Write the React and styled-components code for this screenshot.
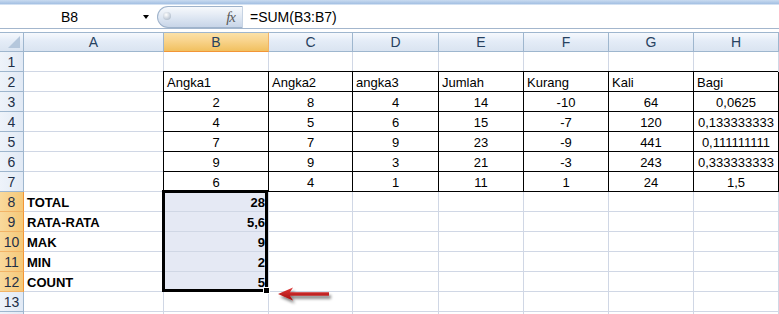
import React from "react";
import styled, { createGlobalStyle, css } from "styled-components";

const Global = createGlobalStyle`
  html, body { margin: 0; padding: 0; background: #fff; }
  body { font-family: "Liberation Sans", Arial, sans-serif; font-size: 13px; color: #000; }
`;

const COLS = [24, 140, 105, 84, 86, 85, 85, 85, 85];
const LETTERS = ["A", "B", "C", "D", "E", "F", "G", "H"];

const Page = styled.div`
  width: 779px;
  height: 314px;
  overflow: hidden;
`;

const RibbonEdge = styled.div`
  height: 5px;
  background: linear-gradient(#c9dbf0, #a8c3e4 70%, #e8f0fa);
`;

const FormulaBar = styled.div`
  height: 22px;
  display: flex;
  align-items: stretch;
  border-bottom: 1px solid #a3b6cd;
  margin-bottom: 3px;
  padding-top: 1px;
`;

const NameBox = styled.div`
  width: 157px;
  display: flex;
  align-items: center;
  position: relative;
  font-size: 14px;
  span { flex: 1; text-align: center; padding-right: 18px; }
`;

const DropArrow = styled.i`
  position: absolute;
  right: 8px;
  top: 9px;
  border-left: 3px solid transparent;
  border-right: 3px solid transparent;
  border-top: 4px solid #000;
`;

const FxPill = styled.div`
  width: 85px;
  border: 1px solid #9fb3cb;
  border-right: none;
  border-radius: 12px 0 0 12px;
  background: linear-gradient(#f7f9fc, #dde6f2 55%, #c8d5e8);
  display: flex;
  align-items: center;
  justify-content: space-between;
  padding: 0 7px 0 5px;
  box-sizing: border-box;
`;

const Knob = styled.i`
  width: 8px;
  height: 8px;
  border-radius: 50%;
  background: radial-gradient(circle at 40% 35%, #ffffff, #b9c4d2 70%);
  margin-top: -2px;
`;

const Fx = styled.span`
  font-family: "Liberation Serif", serif;
  font-style: italic;
  font-size: 15px;
  color: #5a5a5a;
  letter-spacing: -1px;
`;

const FormulaInput = styled.div`
  flex: 1;
  border-left: 1px solid #c6d3e3;
  display: flex;
  align-items: center;
  padding-left: 7px;
  font-size: 14px;
`;

const Sheet = styled.div`
  position: relative;
  display: grid;
  grid-template-columns: ${COLS.map((w) => w + "px").join(" ")};
  grid-auto-rows: 20px;
`;

const Cell = styled.div`
  box-sizing: border-box;
  border-right: 1px solid #d0d7e5;
  border-bottom: 1px solid #d0d7e5;
  line-height: 19px;
  padding: 1px 3px 0;
  white-space: nowrap;
  position: relative;
  text-align: ${({ align }) => align || "left"};
  font-weight: ${({ bold }) => (bold ? "bold" : "normal")};
  ${({ boxed }) =>
    boxed &&
    css`
      border-right-color: #000;
      border-bottom-color: #000;
      box-shadow: -1px -1px 0 #000;
    `}
  ${({ picked }) =>
    picked &&
    css`
      background: #e5e9f4;
    `}
`;

const ColHead = styled.div`
  box-sizing: border-box;
  border-right: 1px solid #9eb6ce;
  border-bottom: 1px solid #9eb6ce;
  border-top: 1px solid #9eb6ce;
  text-align: center;
  line-height: 18px;
  color: #27415f;
  font-size: 14px;
  background: ${({ active }) =>
    active
      ? "linear-gradient(#fbe1a8, #f8d38b 45%, #f1c05f)"
      : "linear-gradient(#f6f9fd, #e4ecf7 45%, #dae4f1)"};
  ${({ active }) => active && "border-bottom-color: #f29536; border-right-color: #f2b366;"}
`;

const Corner = styled(ColHead)`
  position: relative;
  &::after {
    content: "";
    position: absolute;
    right: 3px;
    bottom: 3px;
    border-left: 12px solid transparent;
    border-bottom: 12px solid #b5c7dc;
  }
`;

const RowHead = styled.div`
  box-sizing: border-box;
  border-right: 1px solid #9eb6ce;
  border-bottom: 1px solid #9eb6ce;
  text-align: center;
  line-height: 20px;
  font-size: 14px;
  color: #1e2f47;
  background: ${({ active }) =>
    active ? "linear-gradient(90deg, #f9d99c, #f5c877)" : "linear-gradient(90deg, #eef3fa, #e2eaf5)"};
  ${({ active }) => active && "border-right-color: #f29536; border-bottom-color: #f2b366;"}
`;

const Selection = styled.div`
  position: absolute;
  left: -2px;
  top: -2px;
  width: 106px;
  height: 102px;
  box-sizing: border-box;
  border: 3px solid #000;
  z-index: 2;
  pointer-events: none;
  &::after {
    content: "";
    position: absolute;
    right: -5px;
    bottom: -5px;
    width: 5px;
    height: 5px;
    background: #000;
    border: 1px solid #fff;
  }
`;

const Annotation = styled.svg`
  position: absolute;
  left: 274px;
  top: 254px;
  z-index: 3;
`;

const header = ["Angka1", "Angka2", "angka3", "Jumlah", "Kurang", "Kali", "Bagi"];
const body = [
  [2, 8, 4, 14, -10, 64, "0,0625"],
  [4, 5, 6, 15, -7, 120, "0,133333333"],
  [7, 7, 9, 23, -9, 441, "0,111111111"],
  [9, 9, 3, 21, -3, 243, "0,333333333"],
  [6, 4, 1, 11, 1, 24, "1,5"],
];
const stats = [
  ["TOTAL", "28"],
  ["RATA-RATA", "5,6"],
  ["MAK", "9"],
  ["MIN", "2"],
  ["COUNT", "5"],
];

function buildRows() {
  const rows = [];
  rows.push({ n: 1, cells: Array(8).fill({ v: "" }) });
  rows.push({ n: 2, cells: [{ v: "" }, ...header.map((v) => ({ v, boxed: true }))] });
  body.forEach((r, i) =>
    rows.push({ n: 3 + i, cells: [{ v: "" }, ...r.map((v) => ({ v, boxed: true, align: "center" }))] })
  );
  stats.forEach(([label, val], i) =>
    rows.push({
      n: 8 + i,
      active: true,
      cells: [
        { v: label, bold: true },
        { v: val, bold: true, align: "right", picked: true, sel: i === 0 },
        ...Array(6).fill({ v: "" }),
      ],
    })
  );
  rows.push({ n: 13, cells: Array(8).fill({ v: "" }) });
  // row 14 only peeks in at the bottom edge, so no number is shown
  rows.push({ n: 14, label: "", cells: Array(8).fill({ v: "" }) });
  return rows;
}

export default function App() {
  const rows = buildRows();
  return (
    <Page>
      <Global />
      <RibbonEdge />
      <FormulaBar>
        <NameBox>
          <span>B8</span>
          <DropArrow />
        </NameBox>
        <FxPill>
          <Knob />
          <Fx>fx</Fx>
        </FxPill>
        <FormulaInput>=SUM(B3:B7)</FormulaInput>
      </FormulaBar>
      <Sheet>
        <Corner />
        {LETTERS.map((l) => (
          <ColHead key={l} active={l === "B"}>
            {l}
          </ColHead>
        ))}
        {rows.map((row) => (
          <React.Fragment key={row.n}>
            <RowHead active={row.active}>{row.label !== undefined ? row.label : row.n}</RowHead>
            {row.cells.map((c, i) => (
              <Cell key={i} boxed={c.boxed} align={c.align} bold={c.bold} picked={c.picked}>
                {c.v}
                {c.sel && <Selection />}
              </Cell>
            ))}
          </React.Fragment>
        ))}
        <Annotation width="64" height="22" viewBox="0 0 64 22">
          <defs>
            <linearGradient id="arrowRed" x1="0" y1="0" x2="0" y2="1">
              <stop offset="0" stopColor="#e03a3a" />
              <stop offset="1" stopColor="#a50d0d" />
            </linearGradient>
            <filter id="arrowShadow" x="-20%" y="-50%" width="150%" height="220%">
              <feGaussianBlur in="SourceAlpha" stdDeviation="1.5" />
              <feOffset dx="2" dy="3" />
              <feComponentTransfer>
                <feFuncA type="linear" slope="0.5" />
              </feComponentTransfer>
              <feMerge>
                <feMergeNode />
                <feMergeNode in="SourceGraphic" />
              </feMerge>
            </filter>
          </defs>
          <path
            d="M4 8 L19 1.5 L16 6.3 L55 6.3 L55 9.7 L16 9.7 L19 14.5 Z"
            fill="url(#arrowRed)"
            filter="url(#arrowShadow)"
          />
        </Annotation>
      </Sheet>
    </Page>
  );
}
